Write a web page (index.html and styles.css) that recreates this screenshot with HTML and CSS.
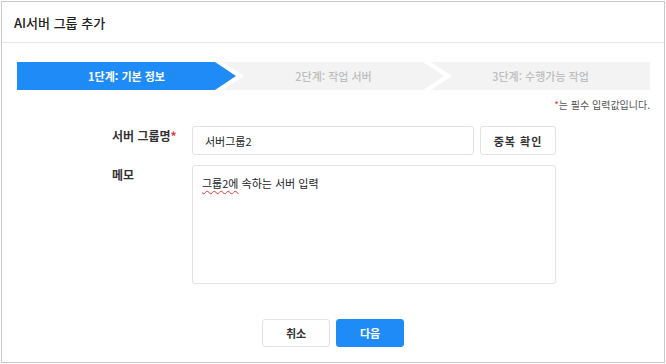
FILE: index.html
```html
<!DOCTYPE html>
<html lang="ko">
<head>
  <meta charset="UTF-8">
  <title>AI서버 그룹 추가</title>
  <link rel="stylesheet" href="styles.css">
</head>
<body>
  <div class="dialog">
    <div class="dialog-header">AI서버 그룹 추가</div>
    <div class="steps">
      <div class="step step-first active">1단계: 기본 정보</div>
      <div class="step step-mid">2단계: 작업 서버</div>
      <div class="step step-last">3단계: 수행가능 작업</div>
    </div>
    <p class="required-note"><span class="star">*</span>는 필수 입력값입니다.</p>
    <div class="form">
      <div class="form-row">
        <label class="form-label">서버 그룹명<span class="star">*</span></label>
        <div class="form-field">
          <input type="text" class="text-input" value="서버그룹2">
          <button class="btn btn-check">중복 확인</button>
        </div>
      </div>
      <div class="form-row">
        <label class="form-label">메모</label>
        <div class="memo"><span class="typo">그룹2에</span> 속하는 서버 입력</div>
      </div>
    </div>
    <div class="dialog-footer">
      <button class="btn btn-cancel">취소</button>
      <button class="btn btn-primary">다음</button>
    </div>
  </div>
</body>
</html>
```

FILE: styles.css
```css
* {
  box-sizing: border-box;
}
body {
  margin: 0;
  background: #fff;
  font-family: "Noto Sans CJK KR", "Noto Sans", sans-serif;
  color: #222;
}
.dialog {
  margin: 1px 0 0 1px;
  width: 664px;
  height: 362px;
  border: 1px solid #c9c9c9;
  display: flex;
  flex-direction: column;
}
.dialog-header {
  height: 41px;
  border-bottom: 1px solid #e6e6e6;
  padding: 0 12px;
  display: flex;
  align-items: center;
  font-size: 13px;
  font-weight: 500;
  color: #222;
}
.steps {
  display: flex;
  margin: 19px 14px 0 15px;
  height: 28px;
}
.step {
  display: flex;
  align-items: center;
  justify-content: center;
  font-size: 11px;
  font-weight: 500;
  color: #bdbdbd;
  background: #f3f3f3;
}
.step.active {
  background: #1f8bf6;
  color: #fff;
  font-weight: 700;
}
.step-first {
  width: 219px;
  clip-path: polygon(0 0, calc(100% - 21px) 0, 100% 50%, calc(100% - 21px) 100%, 0 100%);
}
.step-mid {
  width: 221px;
  margin-left: -13px;
  clip-path: polygon(0 0, calc(100% - 21px) 0, 100% 50%, calc(100% - 21px) 100%, 0 100%, 21px 50%);
}
.step-last {
  flex: 1;
  margin-left: -13px;
  clip-path: polygon(0 0, 100% 0, 100% 100%, 0 100%, 21px 50%);
}
.required-note {
  margin: 8px 14px 0 0;
  text-align: right;
  font-size: 10px;
  color: #555;
  line-height: 14px;
}
.star {
  color: #e53935;
}
.form {
  margin: 14px 0 0 110px;
  display: flex;
  flex-direction: column;
  gap: 10px;
}
.form-row {
  display: flex;
}
.form-label {
  width: 80px;
  padding-top: 1px;
  font-size: 12px;
  font-weight: 700;
  color: #333;
  line-height: 18px;
}
.form-field {
  display: flex;
  gap: 6px;
}
.text-input {
  width: 282px;
  height: 29px;
  border: 1px solid #e3e3e3;
  border-radius: 3px;
  padding: 0 12px;
  font-family: inherit;
  font-size: 11px;
  color: #222;
  outline: none;
}
.btn {
  height: 29px;
  border: 1px solid #e3e3e3;
  border-radius: 3px;
  background: #fff;
  font-family: inherit;
  font-size: 11px;
  font-weight: 700;
  color: #333;
  cursor: pointer;
}
.btn-check {
  width: 76px;
  letter-spacing: 1px;
}
.memo {
  width: 364px;
  height: 119px;
  border: 1px solid #e3e3e3;
  border-radius: 3px;
  padding: 8px 9px;
  font-size: 11px;
  color: #222;
  line-height: 18px;
}
.typo {
  text-decoration: underline wavy #e53935;
  text-decoration-thickness: 1px;
  text-underline-offset: 2px;
}
.dialog-footer {
  margin-top: 35px;
  display: flex;
  justify-content: center;
  gap: 6px;
}
.dialog-footer .btn {
  width: 68px;
  height: 28px;
}
.btn-primary {
  background: #1f8bf6;
  border-color: #1f8bf6;
  color: #fff;
}
```
